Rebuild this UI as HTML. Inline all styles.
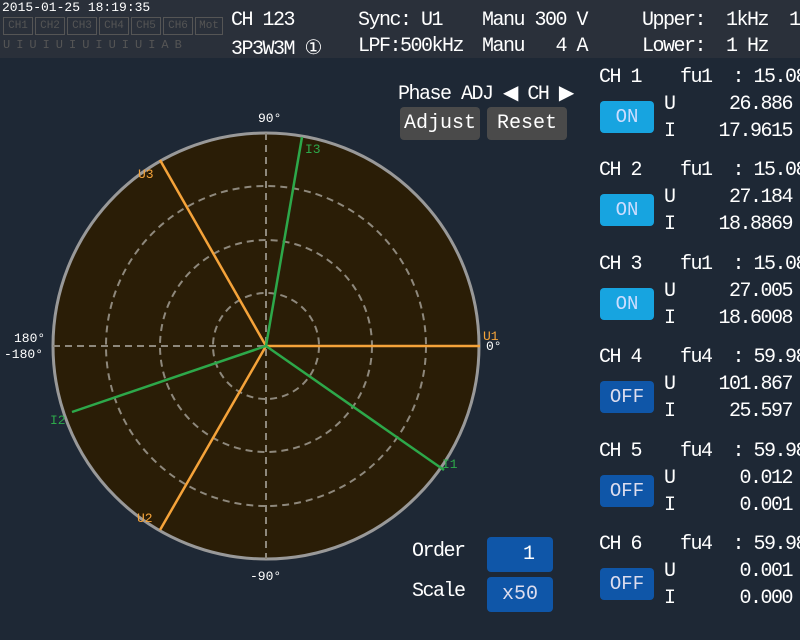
<!DOCTYPE html><html><head><style>
body{margin:0;width:800px;height:640px;background:#1e2835;overflow:hidden;position:relative;font-family:"Liberation Mono",monospace;color:#fff}
.a{position:absolute;white-space:nowrap}
.top{position:absolute;left:0;top:0;width:800px;height:58px;background:#2a303a}
.t{font-size:20px;letter-spacing:-1.5px}
.btn{position:absolute;border-radius:4px;text-align:center;font-size:19px}
.on{background:#17a4e0;color:#cdf}
.off{background:#0f56a8;color:#dde}
.g{background:#4a4a4a;color:#fff;font-size:20px}
.r{text-align:right;width:140px}
.cell{position:absolute;border:1px solid #555;color:#555;font-size:11px;height:16px;line-height:16px;text-align:center}
</style></head><body>
<div class="top"></div>
<div class="a" style="left:2px;top:0;font-size:13px">2015-01-25 18:19:35</div>
<div class="cell" style="left:3px;top:17px;width:28px">CH1</div><div class="cell" style="left:35px;top:17px;width:28px">CH2</div><div class="cell" style="left:67px;top:17px;width:28px">CH3</div><div class="cell" style="left:99px;top:17px;width:28px">CH4</div><div class="cell" style="left:131px;top:17px;width:28px">CH5</div><div class="cell" style="left:163px;top:17px;width:28px">CH6</div><div class="cell" style="left:195px;top:17px;width:26px">Mot</div>
<div class="a" style="left:3px;top:38px;font-size:12px;color:#555;letter-spacing:6px">UIUIUIUIUIUIAB</div>
<div class="a t" style="left:231px;top:9px">CH 123</div>
<div class="a t" style="left:231px;top:35px">3P3W3M ①</div>
<div class="a t" style="left:358px;top:9px">Sync: U1</div>
<div class="a t" style="left:358px;top:35px">LPF:500kHz</div>
<div class="a t" style="left:482px;top:9px">Manu 300 V</div>
<div class="a t" style="left:482px;top:35px">Manu &nbsp;&nbsp;4 A</div>
<div class="a t" style="left:642px;top:9px">Upper: &nbsp;1kHz &nbsp;1</div>
<div class="a t" style="left:642px;top:35px">Lower: &nbsp;1 Hz</div>

<svg class="a" style="left:0;top:0" width="590" height="640">
<circle cx="266" cy="346" r="213" fill="#2a1d06" stroke="#999" stroke-width="3"/>
<g fill="none" stroke="#8e887c" stroke-width="2" stroke-dasharray="7,5">
<circle cx="266" cy="346" r="53"/><circle cx="266" cy="346" r="106"/><circle cx="266" cy="346" r="160"/>
<line x1="266" y1="133" x2="266" y2="559"/><line x1="53" y1="346" x2="479" y2="346"/></g>
<g stroke-width="2.5">
<line x1="266" y1="346" x2="480" y2="346" stroke="#f5a33a"/>
<line x1="266" y1="346" x2="160" y2="160" stroke="#f5a33a"/>
<line x1="266" y1="346" x2="160" y2="530" stroke="#f5a33a"/>
<line x1="266" y1="346" x2="302" y2="137" stroke="#2da84a"/>
<line x1="266" y1="346" x2="72" y2="412" stroke="#2da84a"/>
<line x1="266" y1="346" x2="444" y2="470" stroke="#2da84a"/>
</g>
<g font-family="Liberation Mono" font-size="13">
<text x="483" y="340" fill="#f5a33a">U1</text><text x="138" y="178" fill="#f5a33a">U3</text><text x="137" y="522" fill="#f5a33a">U2</text>
<text x="305" y="153" fill="#2da84a">I3</text><text x="50" y="424" fill="#2da84a">I2</text><text x="442" y="468" fill="#2da84a">I1</text>
<text x="486" y="350" fill="#fff">0°</text><text x="258" y="122" fill="#fff">90°</text><text x="250" y="580" fill="#fff">-90°</text>
<text x="14" y="342" fill="#fff">180°</text><text x="4" y="358" fill="#fff">-180°</text></g>
</svg>
<div class="a t" style="left:398px;top:80px">Phase ADJ ◀ CH ▶</div>
<div class="btn g" style="left:400px;top:107px;width:80px;height:33px;line-height:33px">Adjust</div>
<div class="btn g" style="left:487px;top:107px;width:80px;height:33px;line-height:33px">Reset</div>
<div class="a t" style="left:412px;top:540px">Order</div>
<div class="a t" style="left:412px;top:580px">Scale</div>
<div class="btn off" style="left:487px;top:537px;width:66px;height:35px;line-height:35px;text-align:right;box-sizing:border-box;padding-right:18px;color:#fff;font-size:20px">1</div>
<div class="btn off" style="left:487px;top:577px;width:66px;height:35px;line-height:35px;font-size:20px">x50</div>

<div id="rp"></div>
<script>
var d=[["1","u1","15.08","26.886","17.9615",1],["2","u1","15.08","27.184","18.8869",1],["3","u1","15.08","27.005","18.6008",1],["4","u4","59.98","101.867","25.597",0],["5","u4","59.98","0.012","0.001",0],["6","u4","59.98","0.001","0.000",0]];
var h="";d.forEach(function(c,i){var y=66+i*93.4;
h+='<div class="a t" style="left:599px;top:'+y+'px">CH '+c[0]+'</div>';
h+='<div class="a t" style="left:680px;top:'+y+'px">f'+c[1]+' &nbsp;: '+c[2]+'</div>';
h+='<div class="btn '+(c[5]?'on':'off')+'" style="left:600px;top:'+(y+35)+'px;width:54px;height:32px;line-height:32px">'+(c[5]?'ON':'OFF')+'</div>';
h+='<div class="a t" style="left:664px;top:'+(y+27)+'px">U</div><div class="a t" style="left:664px;top:'+(y+54)+'px">I</div>';
h+='<div class="a t r" style="left:652px;top:'+(y+27)+'px">'+c[3]+'</div><div class="a t r" style="left:652px;top:'+(y+54)+'px">'+c[4]+'</div>';});
document.getElementById("rp").innerHTML=h;
</script>
</body></html>
